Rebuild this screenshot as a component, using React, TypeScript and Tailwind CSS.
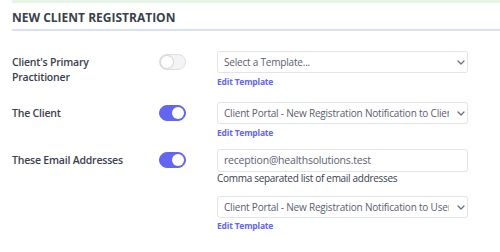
import { FC, ReactNode } from 'react';

const Toggle: FC<{ on: boolean }> = ({ on }) => (
  <div
    className={`relative w-[27px] h-[16px] rounded-full border ${
      on ? 'bg-[#6366f1] border-[#6366f1]' : 'bg-[#f3f4f6] border-[#dcdfe4]'
    }`}
  >
    <div
      className={`absolute top-[1px] w-[12px] h-[12px] rounded-full bg-white ${
        on ? 'right-[1px]' : 'left-[1px] shadow-[0_0_1px_1px_rgba(0,0,0,0.12)]'
      }`}
    />
  </div>
);

const Chevron = () => (
  <svg width="8" height="5" viewBox="0 0 8 5" className="ml-[8px] mr-[2px] shrink-0">
    <polyline points="1,1 4,4 7,1" fill="none" stroke="#6b7080" strokeWidth="1.3" strokeLinecap="round" strokeLinejoin="round" />
  </svg>
);

const SelectBox: FC<{ value: string }> = ({ value }) => (
  <div className="flex items-center h-[22px] w-[251px] border border-[#e1e4e8] rounded-[3px] bg-white pl-[6px]">
    <span className="flex-1 overflow-hidden whitespace-nowrap text-[10px] tracking-[-0.2px] text-[#5b6070]">{value}</span>
    <Chevron />
  </div>
);

const EditLink = () => (
  <div className="mt-[3px] text-[8.5px] tracking-[-0.2px] font-bold text-[#6366f1] leading-[12px]">Edit Template</div>
);

const Row: FC<{ label: string; on: boolean; className?: string; children: ReactNode }> = ({
  label,
  on,
  className,
  children,
}) => (
  <div className={`flex items-start ${className ?? ''}`}>
    <div className="w-[147px] pt-[4px]">
      <div className="max-w-[115px] text-[10.5px] tracking-[-0.2px] font-semibold leading-[15px] text-[#3a404d]">
        {label}
      </div>
    </div>
    <div className="w-[58px] pt-[3px]">
      <Toggle on={on} />
    </div>
    <div className="flex flex-col">{children}</div>
  </div>
);

export default function App() {
  return (
    <div
      className="w-[500px] h-[252px] bg-white pl-[12px] overflow-hidden"
      style={{ fontFamily: '"Open Sans", sans-serif' }}
    >
      <div className="h-[3px] bg-[#e7f5e9]" />
      <div className="pt-[7px] pb-[3px] border-b-2 border-[#d9e0ee] text-[12px] font-bold text-[#3a404d] leading-[16px]">
        NEW CLIENT REGISTRATION
      </div>
      <div className="pt-[20px] flex flex-col">
        <Row label="Client's Primary Practitioner" on={false} className="mb-[14px]">
          <SelectBox value="Select a Template..." />
          <EditLink />
        </Row>
        <Row label="The Client" on={true} className="mb-[10px]">
          <SelectBox value="Client Portal - New Registration Notification to Client" />
          <EditLink />
        </Row>
        <Row label="These Email Addresses" on={true}>
          <div className="flex items-center h-[23px] w-[251px] border border-[#e1e4e8] rounded-[3px] bg-white px-[6px] text-[10.5px] tracking-[-0.2px] text-[#5b6070]">
            reception@healthsolutions.test
          </div>
          <div className="text-[10px] tracking-[-0.3px] text-[#3a404d] leading-[13px]">
            Comma separated list of email addresses
          </div>
          <div className="mt-[11px]">
            <SelectBox value="Client Portal - New Registration Notification to User" />
          </div>
          <div className="mt-[-1px]">
            <EditLink />
          </div>
        </Row>
      </div>
    </div>
  );
}
